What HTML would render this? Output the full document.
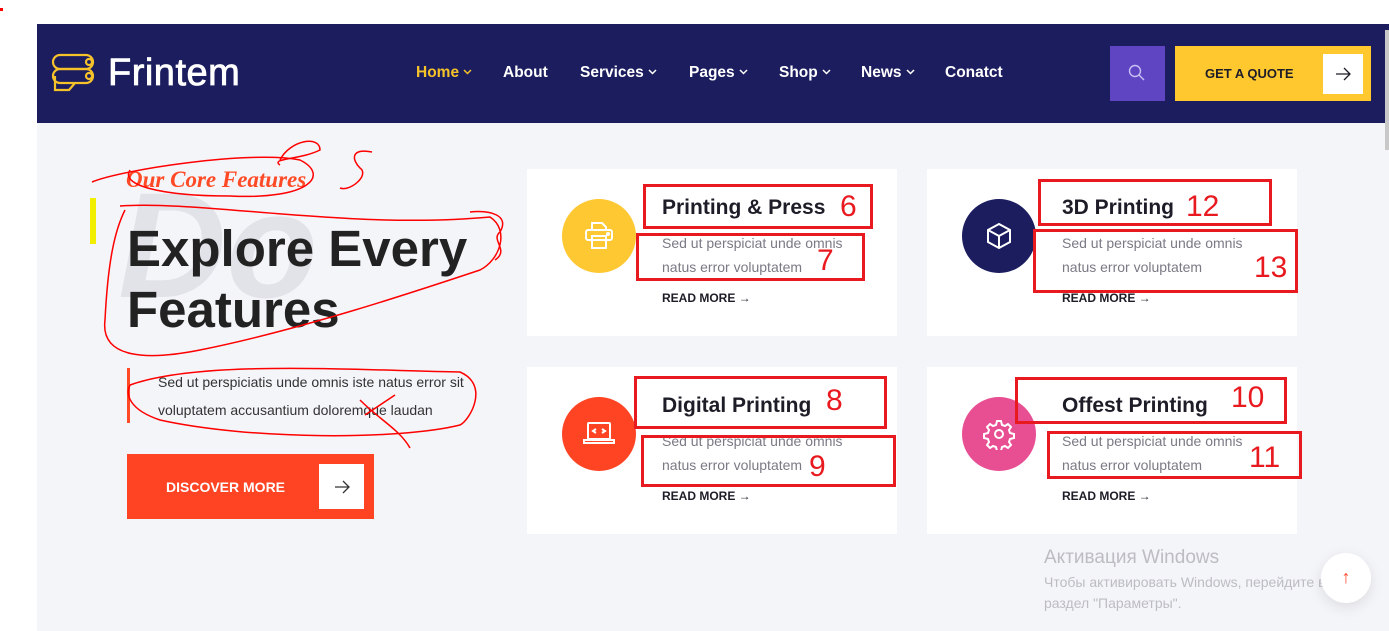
<!DOCTYPE html>
<html><head><meta charset="utf-8"><style>
*{margin:0;padding:0;box-sizing:border-box}
body{width:1389px;height:631px;overflow:hidden;background:#fff;font-family:"Liberation Sans",sans-serif;position:relative}
.a{position:absolute}
.hdr{left:37px;top:24px;width:1352px;height:99px;background:#1b1d5e}
.main{left:37px;top:123px;width:1352px;height:508px;background:#f4f5f9}
.nav{top:64px;color:#fff;font-weight:bold;font-size:15.5px;white-space:nowrap}
.nav svg{margin-left:4px;vertical-align:2px}
.card{background:#fff;width:370px;height:167px}
.circ{width:74px;height:74px;border-radius:50%;display:flex;align-items:center;justify-content:center}
.t{font-size:21px;font-weight:bold;color:#1d1d28;white-space:nowrap}
.d{font-size:14px;color:#7a7a85;line-height:24px;white-space:nowrap}
.r{font-size:12px;font-weight:bold;color:#1d1d28;white-space:nowrap}
.box{border:3px solid #e8191f}
.n{color:#e8191f;font-size:30px;line-height:30px}
</style></head><body>
<div class="a hdr"></div>
<div class="a main"></div>
<div class="a" style="left:1385px;top:30px;width:4px;height:120px;background:#c8c8c8"></div>
<svg class="a" style="left:51px;top:53px" width="46" height="42" viewBox="0 0 46 42" fill="none" stroke="#f6c22a" stroke-width="2.2"><rect x="2" y="2" width="40" height="14" rx="7"/><rect x="2" y="16" width="40" height="14" rx="7"/><circle cx="38" cy="9" r="3"/><circle cx="38" cy="23" r="3"/><path d="M4 23v14h14l6-7"/></svg>
<div class="a" style="left:108px;top:52px;color:#fff;font-size:38px;letter-spacing:0.5px;-webkit-text-stroke:0.8px #fff">Frintem</div>
<div class="a nav" style="left:416px;color:#f6c22a">Home<svg width="9" height="6"><path d="M1 1l3.5 3.5L8 1" fill="none" stroke="#f6c22a" stroke-width="1.5"/></svg></div>
<div class="a nav" style="left:503px">About</div>
<div class="a nav" style="left:580px">Services<svg width="9" height="6"><path d="M1 1l3.5 3.5L8 1" fill="none" stroke="#fff" stroke-width="1.5"/></svg></div>
<div class="a nav" style="left:689px">Pages<svg width="9" height="6"><path d="M1 1l3.5 3.5L8 1" fill="none" stroke="#fff" stroke-width="1.5"/></svg></div>
<div class="a nav" style="left:779px">Shop<svg width="9" height="6"><path d="M1 1l3.5 3.5L8 1" fill="none" stroke="#fff" stroke-width="1.5"/></svg></div>
<div class="a nav" style="left:861px">News<svg width="9" height="6"><path d="M1 1l3.5 3.5L8 1" fill="none" stroke="#fff" stroke-width="1.5"/></svg></div>
<div class="a nav" style="left:945px">Conatct</div>
<div class="a" style="left:1110px;top:46px;width:55px;height:55px;background:#5f45c1"></div>
<svg class="a" style="left:1128px;top:64px" width="18" height="18" fill="none" stroke="#c8c0f5" stroke-width="1.4"><circle cx="7" cy="7" r="5.5"/><path d="M11 11l5 5"/></svg>
<div class="a" style="left:1175px;top:46px;width:196px;height:55px;background:#ffc82f"></div>
<div class="a" style="left:1205px;top:66px;font-size:13px;font-weight:bold;color:#1d1d28">GET A QUOTE</div>
<div class="a" style="left:1323px;top:54px;width:40px;height:40px;background:#fff"></div>
<svg class="a" style="left:1335px;top:66px" width="16" height="16" fill="none" stroke="#1d1d28" stroke-width="1.3"><path d="M1 8h14M9 2l6 6-6 6"/></svg>

<div class="a" style="left:118px;top:170px;font-size:150px;font-style:italic;color:#e2e3e9;font-weight:bold;line-height:150px">Do</div>
<div class="a" style="left:126px;top:167px;color:#ff4a25;font-size:23px;font-style:italic;font-weight:bold;font-family:'Liberation Serif',serif">Our Core Features</div>
<div class="a" style="left:90px;top:198px;width:6px;height:46px;background:#f2ee00"></div>
<div class="a" style="left:127px;top:218px;font-size:51px;font-weight:bold;color:#222;line-height:61px">Explore Every<br>Features</div>
<div class="a" style="left:127px;top:368px;width:3px;height:55px;background:#ff4a25"></div>
<div class="a" style="left:158px;top:368px;font-size:14px;color:#333;line-height:28px;white-space:nowrap">Sed ut perspiciatis unde omnis iste natus error sit<br>voluptatem accusantium doloremque laudan</div>
<div class="a" style="left:127px;top:454px;width:247px;height:65px;background:#ff4424"></div>
<div class="a" style="left:166px;top:479px;font-size:14px;font-weight:bold;color:#fff">DISCOVER MORE</div>
<div class="a" style="left:319px;top:464px;width:45px;height:45px;background:#fff"></div>
<svg class="a" style="left:334px;top:479px" width="16" height="16" fill="none" stroke="#333" stroke-width="1.3"><path d="M1 8h14M9 2l6 6-6 6"/></svg>

<svg class="a" style="left:0;top:0" width="1389" height="631" fill="none" stroke="#f00" stroke-width="1.5">
<path d="M92 182C120 170 250 150 300 160C330 175 310 200 230 196C160 196 120 185 130 170"/>
<path d="M280 160C290 140 320 135 320 150C300 160 270 158 280 165"/>
<path d="M372 152C350 148 352 160 360 168C370 175 350 192 340 188"/>
<path d="M120 206C200 200 350 230 490 217C510 230 500 260 480 270C420 290 300 330 200 350C150 360 100 360 105 320C108 260 115 230 125 210"/>
<path d="M470 212C490 210 510 215 500 232C490 240 510 250 495 260"/>
<path d="M130 385C200 360 350 370 460 372C490 385 470 420 460 425C400 440 250 440 160 420C130 410 125 395 130 385"/>
<path d="M360 400C380 420 400 430 410 448M365 415L395 395"/>
</svg>

<div class="a card" style="left:527px;top:169px"></div>
<div class="a card" style="left:927px;top:169px"></div>
<div class="a card" style="left:527px;top:367px"></div>
<div class="a card" style="left:927px;top:367px"></div>

<div class="a circ" style="left:562px;top:199px;background:#fec832"><svg width="32" height="32" viewBox="0 0 32 32" fill="none" stroke="#fff" stroke-width="2"><path d="M9 10V3h10l4 4v3"/><rect x="3" y="10" width="26" height="10" rx="2"/><rect x="9" y="16" width="14" height="12"/><circle cx="25" cy="14" r="1" fill="#fff"/></svg></div>
<div class="a circ" style="left:962px;top:199px;background:#1b1d5e"><svg width="32" height="32" viewBox="0 0 32 32" fill="none" stroke="#fff" stroke-width="2"><path d="M16 4l11 6v12l-11 6-11-6V10z M5 10l11 6 11-6 M16 16v12"/></svg></div>
<div class="a circ" style="left:562px;top:397px;background:#ff4424"><svg width="34" height="32" viewBox="0 0 34 32" fill="none" stroke="#fff" stroke-width="2"><rect x="6" y="5" width="22" height="16" rx="1"/><path d="M2 22h30v3H2z M14 11l-3 2 3 2 M20 11l3 2-3 2"/></svg></div>
<div class="a circ" style="left:962px;top:397px;background:#e84f93"><svg width="32" height="32" viewBox="0 0 32 32" fill="none" stroke="#fff" stroke-width="2"><circle cx="16" cy="16" r="4"/><path d="M14 3h4l1 4 3 1 3-2 3 3-2 3 1 3 4 1v4l-4 1-1 3 2 3-3 3-3-2-3 1-1 4h-4l-1-4-3-1-3 2-3-3 2-3-1-3-4-1v-4l4-1 1-3-2-3 3-3 3 2 3-1z"/></svg></div>

<div class="a t" style="left:662px;top:196px">Printing &amp; Press</div>
<div class="a d" style="left:662px;top:231px">Sed ut perspiciat unde omnis<br>natus error voluptatem</div>
<div class="a r" style="left:662px;top:291px">READ MORE →</div>
<div class="a t" style="left:1062px;top:196px">3D Printing</div>
<div class="a d" style="left:1062px;top:231px">Sed ut perspiciat unde omnis<br>natus error voluptatem</div>
<div class="a r" style="left:1062px;top:291px">READ MORE →</div>
<div class="a t" style="left:662px;top:394px">Digital Printing</div>
<div class="a d" style="left:662px;top:429px">Sed ut perspiciat unde omnis<br>natus error voluptatem</div>
<div class="a r" style="left:662px;top:489px">READ MORE →</div>
<div class="a t" style="left:1062px;top:394px">Offest Printing</div>
<div class="a d" style="left:1062px;top:429px">Sed ut perspiciat unde omnis<br>natus error voluptatem</div>
<div class="a r" style="left:1062px;top:489px">READ MORE →</div>

<div class="a box" style="left:643px;top:184px;width:230px;height:45px"></div>
<div class="a box" style="left:636px;top:233px;width:229px;height:48px"></div>
<div class="a box" style="left:1038px;top:179px;width:234px;height:47px"></div>
<div class="a box" style="left:1033px;top:229px;width:265px;height:64px"></div>
<div class="a box" style="left:634px;top:376px;width:253px;height:53px"></div>
<div class="a box" style="left:641px;top:435px;width:255px;height:52px"></div>
<div class="a box" style="left:1015px;top:377px;width:272px;height:47px"></div>
<div class="a box" style="left:1047px;top:431px;width:255px;height:48px"></div>
<div class="a n" style="left:840px;top:192px">6</div>
<div class="a n" style="left:817px;top:246px">7</div>
<div class="a n" style="left:1186px;top:192px">12</div>
<div class="a n" style="left:1254px;top:253px">13</div>
<div class="a n" style="left:826px;top:386px">8</div>
<div class="a n" style="left:809px;top:452px">9</div>
<div class="a n" style="left:1231px;top:383px">10</div>
<div class="a n" style="left:1249px;top:443px">11</div>

<div class="a" style="left:1044px;top:547px;font-size:19px;color:#bcbcc2">Активация Windows</div>
<div class="a" style="left:1044px;top:572px;font-size:14px;color:#bcbcc2;line-height:21px;white-space:nowrap">Чтобы активировать Windows, перейдите в<br>раздел "Параметры".</div>
<div class="a" style="left:1321px;top:553px;width:50px;height:50px;border-radius:50%;background:#fff;box-shadow:0 4px 14px rgba(0,0,0,.1);text-align:center;line-height:48px;color:#ff4424;font-size:18px;font-weight:bold">↑</div>
<div class="a" style="left:0;top:8px;width:3px;height:3px;background:#f00"></div>
</body></html>
